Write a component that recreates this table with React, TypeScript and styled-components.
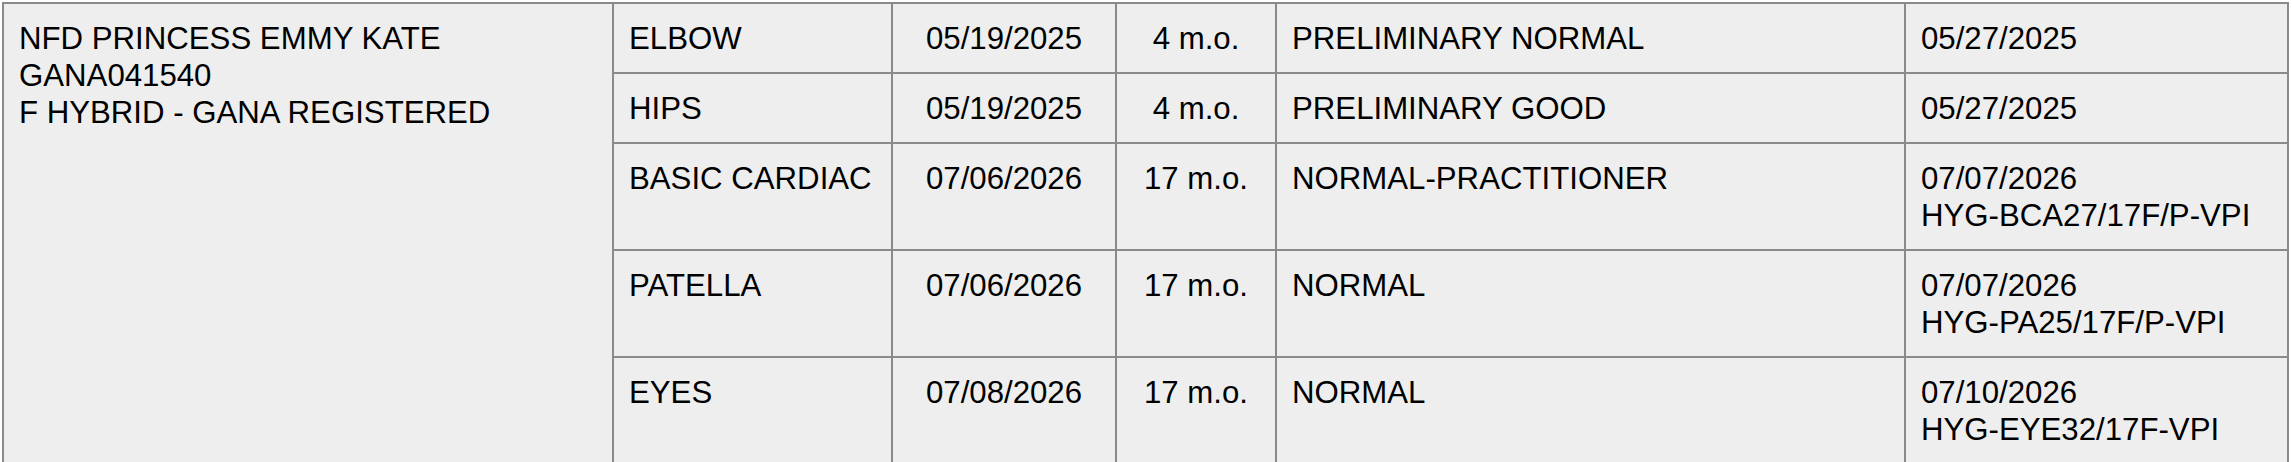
import React from "react";
import styled, { createGlobalStyle } from "styled-components";

const Global = createGlobalStyle`
  html, body { margin: 0; padding: 0; background: #ffffff; }
  body { font-family: "Liberation Sans", Arial, Helvetica, sans-serif; }
`;

const Wrap = styled.div`
  padding: 2px 0 0 2px;
`;

const Table = styled.table`
  border-collapse: collapse;
  table-layout: fixed;
  width: 2285px;
  background: #eeeeee;
  color: #000;
  font-size: 31.2px;
  line-height: 37px;
  border: 2px solid #8a8a8a;
`;

const Cell = styled.td<{ $align?: "left" | "center" }>`
  border: 2px solid #8a8a8a;
  padding: 16px 15px 15px;
  vertical-align: top;
  text-align: ${(p) => p.$align ?? "left"};
  white-space: nowrap;
`;

const Line = styled.div``;

type Row = {
  test: string;
  date: string;
  age: string;
  result: string;
  issued: string[];
};

const rows: Row[] = [
  { test: "ELBOW", date: "05/19/2025", age: "4 m.o.", result: "PRELIMINARY NORMAL", issued: ["05/27/2025"] },
  { test: "HIPS", date: "05/19/2025", age: "4 m.o.", result: "PRELIMINARY GOOD", issued: ["05/27/2025"] },
  { test: "BASIC CARDIAC", date: "07/06/2026", age: "17 m.o.", result: "NORMAL-PRACTITIONER", issued: ["07/07/2026", "HYG-BCA27/17F/P-VPI"] },
  { test: "PATELLA", date: "07/06/2026", age: "17 m.o.", result: "NORMAL", issued: ["07/07/2026", "HYG-PA25/17F/P-VPI"] },
  { test: "EYES", date: "07/08/2026", age: "17 m.o.", result: "NORMAL", issued: ["07/10/2026", "HYG-EYE32/17F-VPI"] },
];

export default function App() {
  return (
    <>
      <Global />
      <Wrap>
        <Table>
          <colgroup>
            <col style={{ width: 610 }} />
            <col style={{ width: 279 }} />
            <col style={{ width: 224 }} />
            <col style={{ width: 160 }} />
            <col style={{ width: 629 }} />
            <col style={{ width: 383 }} />
          </colgroup>
          <tbody>
            {rows.map((r, i) => (
              <tr key={r.test}>
                {i === 0 && (
                  <Cell rowSpan={rows.length}>
                    <Line>NFD PRINCESS EMMY KATE</Line>
                    <Line>GANA041540</Line>
                    <Line>F HYBRID - GANA REGISTERED</Line>
                  </Cell>
                )}
                <Cell>{r.test}</Cell>
                <Cell $align="center">{r.date}</Cell>
                <Cell $align="center">{r.age}</Cell>
                <Cell>{r.result}</Cell>
                <Cell>
                  {r.issued.map((t) => (
                    <Line key={t}>{t}</Line>
                  ))}
                </Cell>
              </tr>
            ))}
          </tbody>
        </Table>
      </Wrap>
    </>
  );
}
